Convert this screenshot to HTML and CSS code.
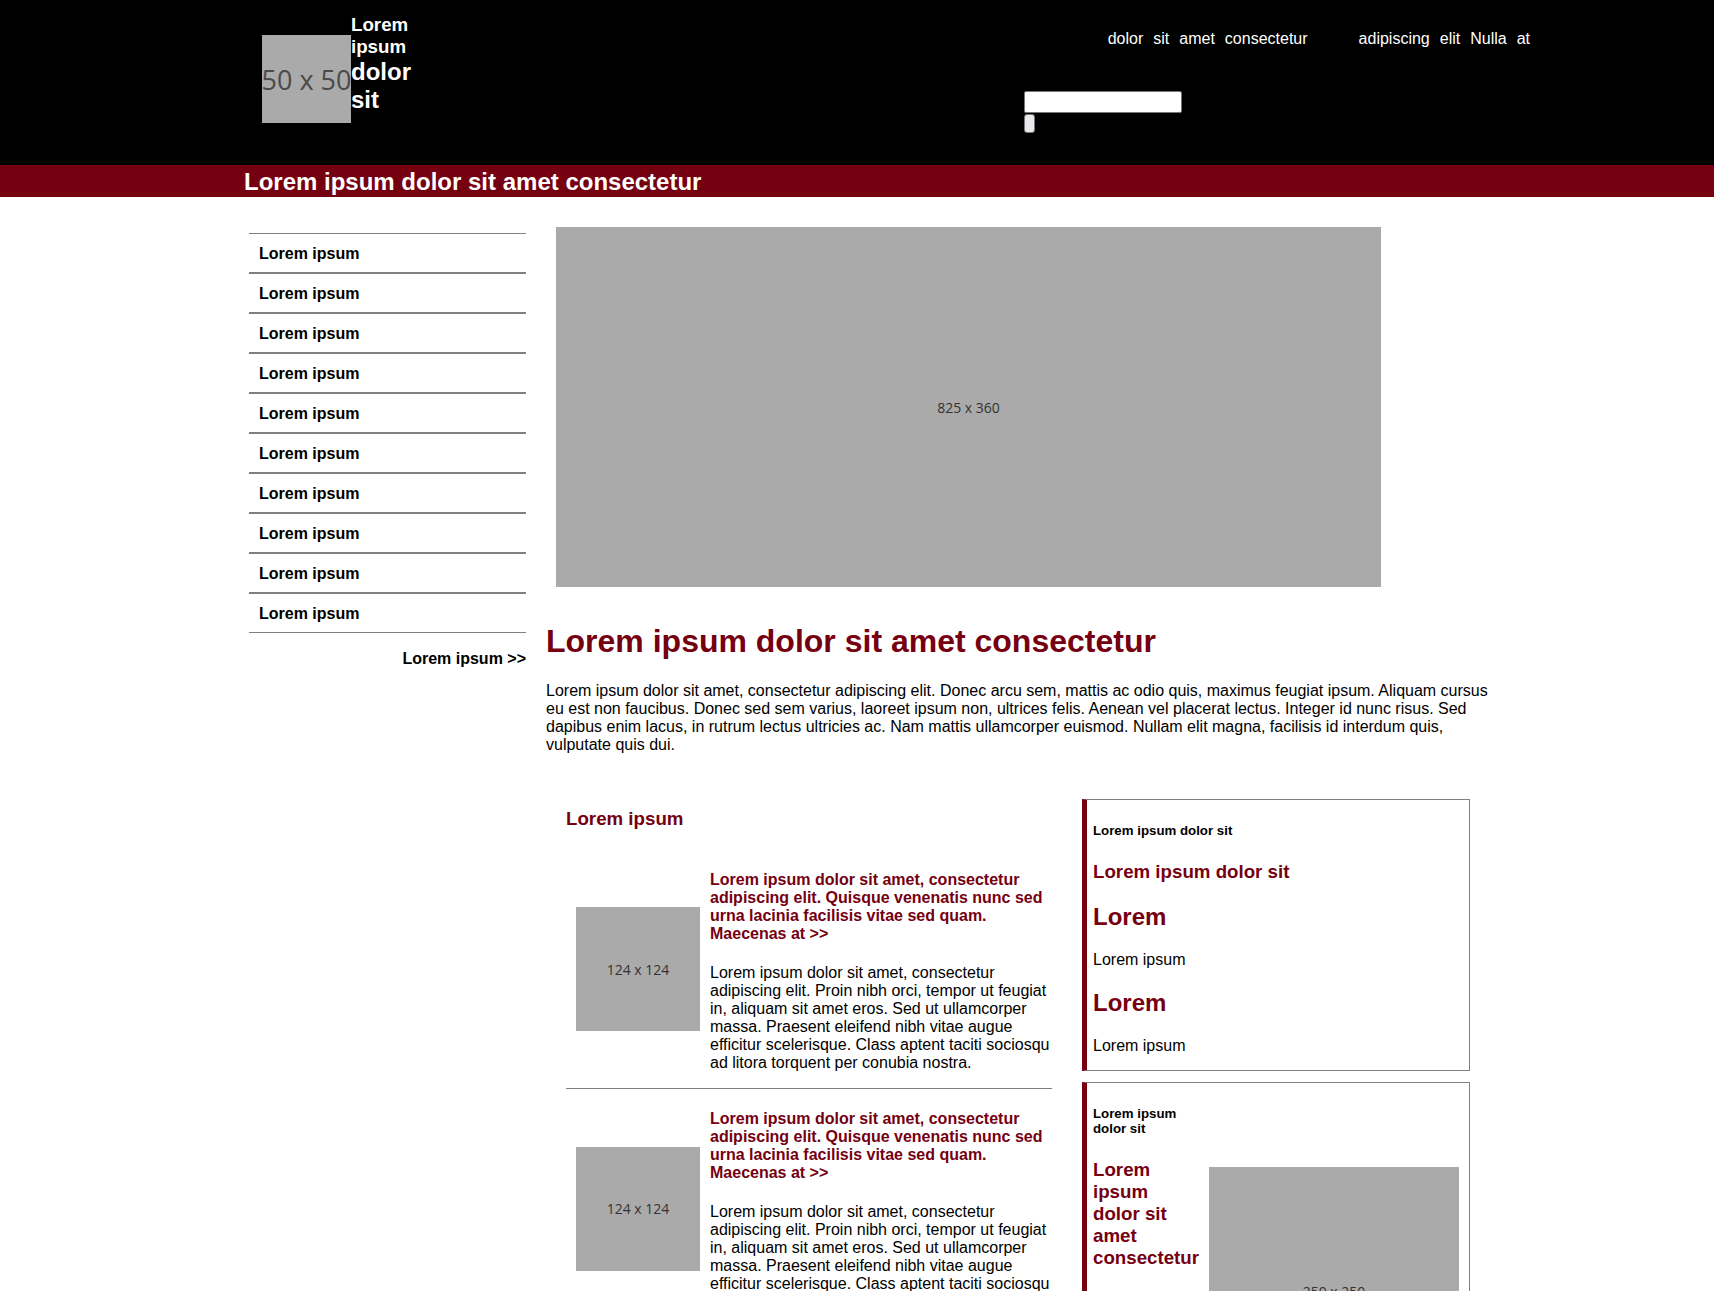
FILE: index.html
```html
<!DOCTYPE html>
<html lang="en">
<head>
<meta charset="utf-8">
<title>Lorem ipsum</title>
<link rel="stylesheet" href="styles.css">
</head>
<body>
<header class="site-header">
  <div class="header-inner">
    <div class="logo">
      <div class="ph ph-logo"><span>50 x 50</span></div>
      <div class="logo-text">
        <span class="logo-small">Lorem ipsum</span>
        <span class="logo-big">dolor sit</span>
      </div>
    </div>
    <div class="header-right">
      <nav class="top-nav">
        <ul class="nav-group">
          <li><a href="#">dolor</a></li>
          <li><a href="#">sit</a></li>
          <li><a href="#">amet</a></li>
          <li><a href="#">consectetur</a></li>
        </ul>
        <ul class="nav-group">
          <li><a href="#">adipiscing</a></li>
          <li><a href="#">elit</a></li>
          <li><a href="#">Nulla</a></li>
          <li><a href="#">at</a></li>
        </ul>
      </nav>
      <form class="search">
        <input class="search-input" type="text">
        <button class="search-btn" type="button"></button>
      </form>
    </div>
  </div>
</header>

<div class="banner">
  <h2 class="banner-title">Lorem ipsum dolor sit amet consectetur</h2>
</div>

<div class="page">
  <aside class="sidebar">
    <ul class="side-list">
      <li><a href="#">Lorem ipsum</a></li>
      <li><a href="#">Lorem ipsum</a></li>
      <li><a href="#">Lorem ipsum</a></li>
      <li><a href="#">Lorem ipsum</a></li>
      <li><a href="#">Lorem ipsum</a></li>
      <li><a href="#">Lorem ipsum</a></li>
      <li><a href="#">Lorem ipsum</a></li>
      <li><a href="#">Lorem ipsum</a></li>
      <li><a href="#">Lorem ipsum</a></li>
      <li><a href="#">Lorem ipsum</a></li>
    </ul>
    <div class="more"><a href="#">Lorem ipsum &gt;&gt;</a></div>
  </aside>

  <main class="main">
    <div class="ph hero"><span>825 x 360</span></div>
    <h1 class="main-title">Lorem ipsum dolor sit amet consectetur</h1>
    <p class="intro">Lorem ipsum dolor sit amet, consectetur adipiscing elit. Donec arcu sem, mattis ac odio quis, maximus feugiat ipsum. Aliquam cursus eu est non faucibus. Donec sed sem varius, laoreet ipsum non, ultrices felis. Aenean vel placerat lectus. Integer id nunc risus. Sed dapibus enim lacus, in rutrum lectus ultricies ac. Nam mattis ullamcorper euismod. Nullam elit magna, facilisis id interdum quis, vulputate quis dui.</p>

    <div class="lower">
      <section class="lower-left">
        <h3 class="lower-title">Lorem ipsum</h3>
        <article class="article">
          <div class="ph thumb"><span>124 x 124</span></div>
          <div class="article-body">
            <p class="article-head"><a href="#">Lorem ipsum dolor sit amet, consectetur adipiscing elit. Quisque venenatis nunc sed urna lacinia facilisis vitae sed quam. Maecenas at &gt;&gt;</a></p>
            <p class="article-text">Lorem ipsum dolor sit amet, consectetur adipiscing elit. Proin nibh orci, tempor ut feugiat in, aliquam sit amet eros. Sed ut ullamcorper massa. Praesent eleifend nibh vitae augue efficitur scelerisque. Class aptent taciti sociosqu ad litora torquent per conubia nostra.</p>
          </div>
        </article>
        <article class="article">
          <div class="ph thumb"><span>124 x 124</span></div>
          <div class="article-body">
            <p class="article-head"><a href="#">Lorem ipsum dolor sit amet, consectetur adipiscing elit. Quisque venenatis nunc sed urna lacinia facilisis vitae sed quam. Maecenas at &gt;&gt;</a></p>
            <p class="article-text">Lorem ipsum dolor sit amet, consectetur adipiscing elit. Proin nibh orci, tempor ut feugiat in, aliquam sit amet eros. Sed ut ullamcorper massa. Praesent eleifend nibh vitae augue efficitur scelerisque. Class aptent taciti sociosqu ad litora torquent per conubia nostra.</p>
          </div>
        </article>
      </section>

      <aside class="lower-right">
        <div class="box">
          <h5 class="box-h5">Lorem ipsum dolor sit</h5>
          <h3 class="box-h3">Lorem ipsum dolor sit</h3>
          <h2 class="box-h2">Lorem</h2>
          <p class="box-p">Lorem ipsum</p>
          <h2 class="box-h2">Lorem</h2>
          <p class="box-p">Lorem ipsum</p>
        </div>
        <div class="box box-split">
          <div class="box-split-text">
            <h5 class="box-h5">Lorem ipsum dolor sit</h5>
            <h3 class="box-h3">Lorem ipsum dolor sit amet consectetur</h3>
            <p class="box-p">Lorem ipsum</p>
          </div>
          <div class="ph box-img"><span>250 x 250</span></div>
        </div>
      </aside>
    </div>
  </main>
</div>
</body>
</html>
```

FILE: styles.css
```css
body {
  margin: 0;
  font-family: "Liberation Sans", Arial, sans-serif;
  font-size: 16px;
  color: #000;
  background: #fff;
}

a {
  color: inherit;
  text-decoration: none;
}

/* placeholders */
.ph {
  background: #aaaaaa;
  display: flex;
  align-items: center;
  justify-content: center;
  overflow: hidden;
  color: #333;
  font-family: "Open Sans", "DejaVu Sans", sans-serif;
  white-space: nowrap;
  flex-shrink: 0;
}

/* header */
.site-header {
  background: #000;
  height: 165px;
}

.header-inner {
  display: flex;
  align-items: flex-start;
  height: 100%;
  box-sizing: border-box;
  padding-left: 262px;
  padding-right: 184px;
}

.logo {
  display: flex;
  align-items: flex-start;
}

.ph-logo {
  width: 89px;
  height: 88px;
  margin-top: 35px;
  font-size: 27px;
  color: #4a4a4a;
}

.logo-text {
  width: 70px;
  margin-top: 14px;
  color: #fff;
  font-weight: bold;
}

.logo-small {
  display: block;
  font-size: 18.72px;
}

.logo-big {
  display: block;
  font-size: 24px;
}

.header-right {
  margin-left: auto;
  width: 506px;
}

.top-nav {
  display: flex;
  justify-content: flex-end;
  gap: 51px;
  margin-top: 30px;
}

.nav-group {
  display: flex;
  gap: 10px;
  list-style: none;
  margin: 0;
  padding: 0;
}

.nav-group a {
  color: #fff;
}

.search {
  margin: 42.6px 0 0;
}

.search-input {
  display: block;
  width: 158px;
  height: 22px;
  box-sizing: border-box;
  margin: 0;
  padding: 1px 2px;
  border: 1px solid #767676;
  border-radius: 2px;
  background: #fff;
}

.search-btn {
  display: block;
  width: 11px;
  height: 19px;
  margin: 1px 0 0;
  padding: 0;
  border: 1px solid #767676;
  border-radius: 3px;
  background: #e9e9ed;
}

/* banner */
.banner {
  background: #750010;
  height: 32px;
  box-sizing: border-box;
  padding: 3px 0 0 244px;
}

.banner-title {
  margin: 0;
  font-size: 24px;
  line-height: 28px;
  font-weight: bold;
  color: #fff;
}

/* page */
.page {
  display: flex;
  align-items: flex-start;
  padding-left: 249px;
}

.sidebar {
  width: 277px;
  margin-top: 36px;
  flex-shrink: 0;
}

.side-list {
  list-style: none;
  margin: 0;
  padding: 0;
}

.side-list li {
  border-top: 1px solid #808080;
  border-bottom: 1px solid #808080;
}

.side-list a {
  display: block;
  padding: 11px 10px 9px;
  line-height: 18px;
  font-weight: bold;
  color: #000;
}

.more {
  margin-top: 17px;
  text-align: right;
  font-weight: bold;
}

.main {
  margin-left: 20px;
  width: 955px;
  flex-shrink: 0;
}

.hero {
  width: 825px;
  height: 360px;
  margin: 30px 0 0 10px;
  font-size: 14px;
}

.main-title {
  margin: 36px 0 22.44px;
  font-size: 32px;
  font-weight: bold;
  color: #750010;
}

.intro {
  margin: 0;
}

.lower {
  display: flex;
  align-items: flex-start;
  margin-top: 44.4px;
}

.lower-left {
  width: 486px;
  padding-left: 20px;
  flex-shrink: 0;
}

.lower-title {
  font-size: 18.72px;
  font-weight: bold;
  margin: 9px 0 41px;
  color: #750010;
}

.article {
  display: flex;
  align-items: center;
  border-bottom: 1px solid #808080;
  padding-bottom: 16px;
}

.article + .article {
  padding-top: 21px;
}

.thumb {
  width: 124px;
  height: 124px;
  margin: 0 0 4.4px 10px;
  font-size: 14px;
}

.article-body {
  width: 342px;
  margin-left: 10px;
}

.article-head {
  margin: 0 0 21.3px;
  font-weight: bold;
  color: #750010;
}

.article-text {
  margin: 0;
}

.lower-right {
  width: 388px;
  margin-left: 30px;
  flex-shrink: 0;
}

.box {
  border: 1px solid #808080;
  border-left: 5px solid #750010;
  padding: 0 10px 0 6px;
}

.box + .box {
  margin-top: 11px;
}

.box-h5 {
  font-size: 13.28px;
  font-weight: bold;
  margin: 23px 0;
}

.box-h3 {
  font-size: 18.72px;
  font-weight: bold;
  margin: 19.5px 0;
  color: #750010;
}

.box-h2 {
  font-size: 24px;
  font-weight: bold;
  margin: 20px 0;
  color: #750010;
}

.box-p {
  margin: 15.5px 0;
}

.box-split {
  display: flex;
  align-items: flex-start;
}

.box-split-text {
  width: 106.5px;
  flex-shrink: 0;
}

.box-img {
  width: 250px;
  height: 250px;
  margin: 83.5px 0 0 auto;
  font-size: 14px;
}
```
